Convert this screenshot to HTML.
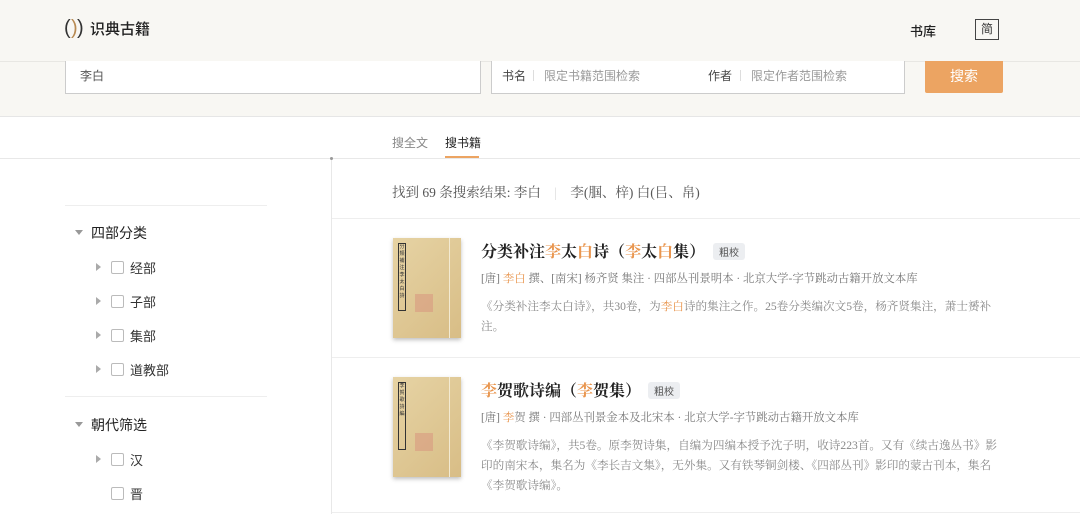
<!DOCTYPE html>
<html><head><meta charset="utf-8"><style>
*{margin:0;padding:0;box-sizing:border-box}
body{width:1080px;height:514px;overflow:hidden;background:#fff;font-family:"Liberation Sans","Noto Sans CJK SC",sans-serif;color:#333;position:relative}
.a{position:absolute}
.serif{font-family:"Liberation Serif","Noto Serif CJK SC",serif}
.o{color:#e9964f}
.cb{position:absolute;width:13px;height:13px;border:1px solid #bbb;border-radius:2px;background:#fff}
.tri{position:absolute;width:0;height:0;border-top:4px solid transparent;border-bottom:4px solid transparent;border-left:5px solid #aaa}
.dn{position:absolute;width:0;height:0;border-left:4px solid transparent;border-right:4px solid transparent;border-top:5px solid #999}
.lab{position:absolute;font-size:13px;color:#333}
.cover{position:absolute;width:68px;height:100px;background:linear-gradient(135deg,#e6d3a4,#d8bd86);box-shadow:0 2px 4px rgba(0,0,0,.25)}
.cover .strip{position:absolute;left:5px;top:5px;width:8px;height:68px;border:1px solid #333;font-size:5px;line-height:7px;color:#333;text-align:center;overflow:hidden}
.cover .seal{position:absolute;left:22px;top:56px;width:18px;height:18px;background:#d99a80;opacity:.6}
.cover .bind{position:absolute;left:56px;top:0;width:1px;height:100px;background:#f3ead2}
.tag{position:absolute;font-size:10px;background:#eceef1;color:#555;padding:1px 6px;border-radius:3px}
</style></head><body>
<div class="a" style="left:0;top:0;width:1080px;height:117px;background:#f8f7f3;border-bottom:1px solid #e6e6e6"></div>
<div class="a" style="left:0;top:61px;width:1080px;height:1px;background:#e8e7e3"></div>
<div class="a" style="left:64px;top:17px;font-size:20px;line-height:22px;color:#333">(</div>
<div class="a" style="left:71px;top:17px;font-size:20px;line-height:22px;color:#b88a52">)</div>
<div class="a" style="left:77px;top:17px;font-size:20px;line-height:22px;color:#333">)</div>
<div class="a" style="left:90px;top:18px;font-size:15px;color:#222;font-weight:500">识典古籍</div>
<div class="a" style="left:910px;top:21px;font-size:13px;color:#222;font-weight:500">书库</div>
<div class="a" style="left:975px;top:19px;width:24px;height:21px;border:1px solid #444;font-size:12px;text-align:center;line-height:19px">简</div>
<div class="a" style="left:65px;top:61px;width:416px;height:33px;background:#fff;border:1px solid #ccc;border-top:none"></div>
<div class="a" style="left:80px;top:67px;font-size:12px;color:#555">李白</div>
<div class="a" style="left:491px;top:61px;width:414px;height:33px;background:#fff;border:1px solid #ccc;border-top:none"></div>
<div class="a" style="left:502px;top:67px;font-size:12px;color:#444">书名</div>
<div class="a" style="left:533px;top:70px;width:1px;height:11px;background:#ddd"></div>
<div class="a" style="left:544px;top:67px;font-size:12px;color:#999">限定书籍范围检索</div>
<div class="a" style="left:708px;top:67px;font-size:12px;color:#444">作者</div>
<div class="a" style="left:740px;top:70px;width:1px;height:11px;background:#ddd"></div>
<div class="a" style="left:751px;top:67px;font-size:12px;color:#999">限定作者范围检索</div>
<div class="a" style="left:925px;top:61px;width:78px;height:32px;background:#eca462;border-radius:0 0 2px 2px;color:#fff;font-size:14px;text-align:center;line-height:30px">搜索</div>
<div class="a" style="left:392px;top:134px;font-size:12px;color:#888">搜全文</div>
<div class="a" style="left:445px;top:134px;font-size:12px;color:#222">搜书籍</div>
<div class="a" style="left:445px;top:156px;width:34px;height:2px;background:#eca462"></div>
<div class="a" style="left:0;top:158px;width:1080px;height:1px;background:#e8e8e8"></div>
<div class="a" style="left:331px;top:158px;width:1px;height:356px;background:#e8e8e8"></div>
<div class="a" style="left:330px;top:157px;width:3px;height:3px;background:#999;border-radius:50%"></div>
<div class="a" style="left:65px;top:205px;width:202px;height:1px;background:#eee"></div>
<div class="dn" style="left:75px;top:230px"></div>
<div class="lab" style="left:91px;top:223px;font-size:14px;color:#222">四部分类</div>
<div class="tri" style="left:96px;top:263px"></div><div class="cb" style="left:111px;top:261px"></div><div class="lab" style="left:130px;top:258px">经部</div>
<div class="tri" style="left:96px;top:297px"></div><div class="cb" style="left:111px;top:295px"></div><div class="lab" style="left:130px;top:292px">子部</div>
<div class="tri" style="left:96px;top:331px"></div><div class="cb" style="left:111px;top:329px"></div><div class="lab" style="left:130px;top:326px">集部</div>
<div class="tri" style="left:96px;top:365px"></div><div class="cb" style="left:111px;top:363px"></div><div class="lab" style="left:130px;top:360px">道教部</div>
<div class="a" style="left:65px;top:396px;width:202px;height:1px;background:#eee"></div>
<div class="dn" style="left:75px;top:422px"></div>
<div class="lab" style="left:91px;top:415px;font-size:14px;color:#222">朝代筛选</div>
<div class="tri" style="left:96px;top:455px"></div><div class="cb" style="left:111px;top:453px"></div><div class="lab" style="left:130px;top:450px">汉</div>
<div class="cb" style="left:111px;top:487px"></div><div class="lab" style="left:130px;top:484px">晋</div>
<div class="a serif" style="left:392px;top:181px;font-size:13.5px;color:#555;white-space:nowrap">找到 69 条搜索结果: 李白 <span style="color:#ddd;margin:0 10px">|</span> 李(腘、梓) 白(㠯、帛)</div>
<div class="a" style="left:332px;top:218px;width:748px;height:1px;background:#eee"></div>
<div class="cover" style="left:393px;top:238px"><div class="strip">分類補注李太白詩</div><div class="seal"></div><div class="bind"></div></div>
<div class="a serif" style="left:481px;top:239px;font-size:16px;color:#222;white-space:nowrap;font-weight:bold">分类补注<span class="o">李</span>太<span class="o">白</span>诗（<span class="o">李</span>太<span class="o">白</span>集）</div>
<div class="tag" style="left:713px;top:243px">粗校</div>
<div class="a serif" style="left:481px;top:270px;font-size:11.4px;color:#777;white-space:nowrap">[唐] <span class="o">李白</span> 撰、[南宋] 杨齐贤 集注 · 四部丛刊景明本 · 北京大学-字节跳动古籍开放文本库</div>
<div class="a serif" style="left:481px;top:297px;width:525px;font-size:11.6px;line-height:20px;color:#888">《分类补注李太白诗》，共30卷，为<span class="o">李白</span>诗的集注之作。25卷分类编次文5卷，杨齐贤集注，萧士赟补注。</div>
<div class="a" style="left:332px;top:357px;width:748px;height:1px;background:#eee"></div>
<div class="cover" style="left:393px;top:377px"><div class="strip">李賀歌詩編</div><div class="seal"></div><div class="bind"></div></div>
<div class="a serif" style="left:481px;top:378px;font-size:16px;color:#222;white-space:nowrap;font-weight:bold"><span class="o">李</span>贺歌诗编（<span class="o">李</span>贺集）</div>
<div class="tag" style="left:648px;top:382px">粗校</div>
<div class="a serif" style="left:481px;top:409px;font-size:11.4px;color:#777;white-space:nowrap">[唐] <span class="o">李</span>贺 撰 · 四部丛刊景金本及北宋本 · 北京大学-字节跳动古籍开放文本库</div>
<div class="a serif" style="left:481px;top:436px;width:518px;font-size:11.6px;line-height:20px;color:#888">《李贺歌诗编》，共5卷。原李贺诗集，自编为四编本授予沈子明，收诗223首。又有《续古逸丛书》影印的南宋本，集名为《李长吉文集》，无外集。又有铁琴铜剑楼、《四部丛刊》影印的蒙古刊本，集名《李贺歌诗编》。</div>
<div class="a" style="left:332px;top:512px;width:748px;height:1px;background:#eee"></div>
</body></html>
